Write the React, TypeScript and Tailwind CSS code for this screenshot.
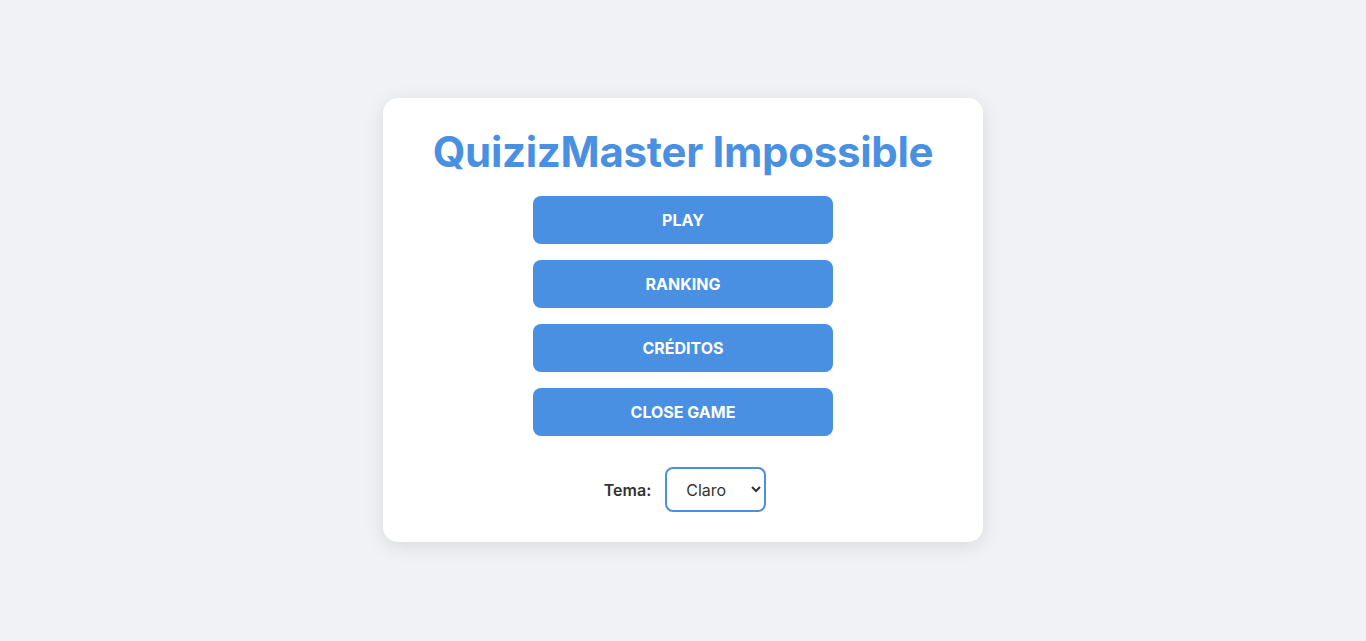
import { useState } from 'react';

const App = () => {
  const [tema, setTema] = useState('claro');
  const buttons = ['PLAY', 'RANKING', 'CRÉDITOS', 'CLOSE GAME'];

  return (
    <div className="min-h-[641px] bg-[#f0f2f5] flex justify-center pt-[98px] font-['Inter',sans-serif]">
      <div className="w-[600px] h-[444px] bg-white rounded-[15px] shadow-[0_4px_20px_rgba(0,0,0,0.1)] flex flex-col items-center pt-[30px]">
        <h1 className="text-[42px] leading-[48px] font-bold text-[#4a90e2] tracking-[-0.3px]">
          QuizizMaster Impossible
        </h1>

        {/* Menu */}
        <div className="mt-[20px] flex flex-col gap-4">
          {buttons.map((label) => (
            <button
              key={label}
              className="w-[300px] h-[48px] rounded-lg bg-[#4a90e2] text-white text-[16px] font-bold"
            >
              {label}
            </button>
          ))}
        </div>

        {/* Theme */}
        <div className="mt-[31px] flex items-center gap-[14px] pl-[4px]">
          <label className="text-[16px] font-semibold text-[#333]">Tema:</label>
          <select
            value={tema}
            onChange={(e) => setTema(e.target.value)}
            className="w-[101px] h-[45px] border-2 border-[#4a90e2] rounded-lg bg-white text-[16px] text-[#333] pl-[15px] pr-[4px]"
          >
            <option value="claro">Claro</option>
            <option value="escuro">Escuro</option>
          </select>
        </div>
      </div>
    </div>
  );
};

export default App;
